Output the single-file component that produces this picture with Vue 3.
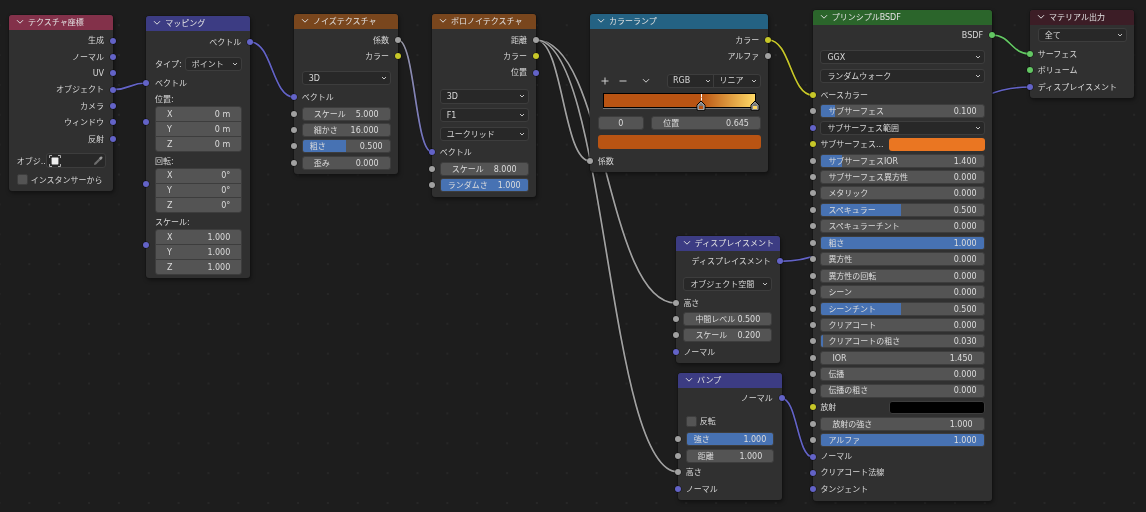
<script setup>
const out = (t, y, s = 'g') => ({ k: 'out', t, y, s, h: 16 })
const inp = (t, y, s = 'p') => ({ k: 'in', t, y, s, h: 16 })
const num = (t, v, y, o = {}) => ({ k: 'num', t, v, y, s: 'g', h: 14, ...o })
const pl = (t, v, y) => num(t, v, y, { plain: true })
const dd = (t, y, o = {}) => ({ k: 'dd', t, y, h: 14.5, ...o })
const lbl = (t, y) => ({ k: 'lbl', t, y, h: 12 })
const grp = (y, h, top, items) => ({ k: 'grp', y, h, top, items, s: 'p' })
const ax = (v) => ['X', 'Y', 'Z'].map((a) => ({ a, v }))

const rawNodes = [
  {
    id: 'tex', title: 'テクスチャ座標', head: 'h-tex', x: 9, y: 15, w: 104, b: 191,
    rows: [
      out('生成', 40.5, 'p'), out('ノーマル', 57, 'p'), out('UV', 73.3, 'p'), out('オブジェクト', 89.7, 'p'),
      out('カメラ', 106, 'p'), out('ウィンドウ', 122.5, 'p'), out('反射', 139, 'p'),
      { k: 'obj', t: 'オブジ...', y: 161, h: 15 },
      { k: 'chk', t: 'インスタンサーから', y: 180, h: 12 },
    ],
  },
  {
    id: 'map', title: 'マッピング', head: 'h-vec', x: 146.3, y: 16, w: 104, b: 278,
    rows: [
      out('ベクトル', 42, 'p'),
      { k: 'type', t: 'タイプ:', v: 'ポイント', y: 64, h: 14.5 },
      inp('ベクトル', 83),
      lbl('位置:', 99.3), grp(129.5, 44, 12, ax('0 m')),
      lbl('回転:', 161.3), grp(190.5, 43, 12, ax('0°')),
      lbl('スケール:', 222.3), grp(252.3, 44, 12, ax('1.000')),
    ],
  },
  {
    id: 'noise', title: 'ノイズテクスチャ', head: 'h-tx', x: 294, y: 14, w: 104, b: 173.5,
    rows: [
      out('係数', 40), out('カラー', 56, 'y'), dd('3D', 78), inp('ベクトル', 97),
      pl('スケール', '5.000', 114), pl('細かさ', '16.000', 130), num('粗さ', '0.500', 146, { f: 0.5 }), pl('歪み', '0.000', 163),
    ],
  },
  {
    id: 'vor', title: 'ボロノイテクスチャ', head: 'h-tx', x: 432, y: 14, w: 104, b: 196.7,
    rows: [
      out('距離', 40), out('カラー', 56, 'y'), out('位置', 72.5, 'p'),
      dd('3D', 96.3), dd('F1', 115.2), dd('ユークリッド', 134.2), inp('ベクトル', 152),
      pl('スケール', '8.000', 169), num('ランダムさ', '1.000', 185, { f: 1 }),
    ],
  },
  {
    id: 'ramp', title: 'カラーランプ', head: 'h-ramp', x: 590, y: 14, w: 178.3, b: 171.7,
    rows: [
      out('カラー', 40, 'y'), out('アルファ', 56),
      { k: 'ramp', y: 112.2, h: 75.5 },
      inp('係数', 161, 'g'),
    ],
  },
  {
    id: 'bsdf', title: 'プリンシプルBSDF', head: 'h-sh', x: 812.7, y: 10, w: 179.3, b: 500.7,
    rows: [
      out('BSDF', 35, 'e'), dd('GGX', 57), dd('ランダムウォーク', 76), inp('ベースカラー', 95, 'y'),
      num('サブサーフェス', '0.100', 111.3, { f: 0.085 }),
      dd('サブサーフェス範囲', 128, { s: 'p' }),
      { k: 'col', t: 'サブサーフェス...', c: 'swatch-orange', y: 144.5, h: 14, s: 'y' },
      num('サブサーフェスIOR', '1.400', 161.2, { f: 0.127 }),
      num('サブサーフェス異方性', '0.000', 177.3), num('メタリック', '0.000', 193.3),
      num('スペキュラー', '0.500', 210.2, { f: 0.49 }), num('スペキュラーチント', '0.000', 226.3),
      num('粗さ', '1.000', 243, { f: 1 }), num('異方性', '0.000', 259.3), num('異方性の回転', '0.000', 276),
      num('シーン', '0.000', 292.2), num('シーンチント', '0.500', 309, { f: 0.49 }), num('クリアコート', '0.000', 325.3),
      num('クリアコートの粗さ', '0.030', 341.3, { f: 0.012 }), pl('IOR', '1.450', 358.3),
      num('伝播', '0.000', 374.3), num('伝播の粗さ', '0.000', 391),
      { k: 'col', t: '放射', c: 'swatch-black', y: 407.5, h: 14, s: 'y' },
      pl('放射の強さ', '1.000', 424.3), num('アルファ', '1.000', 440.2, { f: 1 }),
      inp('ノーマル', 457), inp('クリアコート法線', 473), inp('タンジェント', 489.3),
    ],
  },
  {
    id: 'outn', title: 'マテリアル出力', head: 'h-out', x: 1030, y: 10, w: 104, b: 97.7,
    rows: [dd('全て', 35), inp('サーフェス', 54, 'e'), inp('ボリューム', 70.3, 'e'), inp('ディスプレイスメント', 87)],
  },
  {
    id: 'disp', title: 'ディスプレイスメント', head: 'h-vec', x: 675.7, y: 236, w: 104, b: 363.3,
    rows: [
      out('ディスプレイスメント', 261.3, 'p'), dd('オブジェクト空間', 284), inp('高さ', 303, 'g'),
      pl('中間レベル', '0.500', 319.3), pl('スケール', '0.200', 335.3), inp('ノーマル', 352),
    ],
  },
  {
    id: 'bump', title: 'バンプ', head: 'h-vec', x: 678, y: 373, w: 103.7, b: 500,
    rows: [
      out('ノーマル', 398.3, 'p'),
      { k: 'chk', t: '反転', y: 421.3, h: 12 },
      num('強さ', '1.000', 439.3, { f: 1 }), pl('距離', '1.000', 456.3), inp('高さ', 472, 'g'), inp('ノーマル', 489),
    ],
  },
]

const HEAD = 14.5
const nodes = rawNodes.map((n) => {
  let cursor = n.y + HEAD
  const rows = n.rows.map((r) => {
    const top = r.y - r.h / 2
    const mt = +(top - cursor).toFixed(2)
    cursor = top + r.h
    return { ...r, mt }
  })
  return { ...n, rows, h: n.b - n.y }
})

const curve = (x1, y1, x2, y2) => {
  const d = (x2 - x1) / 2
  return `M${x1} ${y1}C${x1 + d} ${y1} ${x2 - d} ${y2} ${x2} ${y2}`
}
const links = [
  { d: curve(113, 89.7, 146.3, 83), c: '#6363c7' },
  { d: curve(250.3, 42, 294, 97), c: '#6363c7' },
  { d: curve(398, 40, 432, 152), c: 'url(#gp)' },
  { d: curve(536, 40, 590, 161), c: '#a1a1a1' },
  { d: curve(536, 40, 675.7, 303), c: '#a1a1a1' },
  { d: curve(536, 40, 678, 472), c: '#a1a1a1' },
  { d: curve(768.3, 40, 812.7, 95), c: '#c7c729' },
  { d: curve(992, 35, 1030, 54), c: '#63c763' },
  { d: curve(779.7, 261.3, 1030, 87), c: '#6363c7' },
  { d: curve(781.7, 398.3, 812.7, 457), c: '#6363c7' },
]
</script>

<template>
  <main class="canvas">
    <svg class="links" width="1146" height="512" viewBox="0 0 1146 512">
      <defs>
        <linearGradient id="gp" gradientUnits="userSpaceOnUse" x1="398" y1="0" x2="432" y2="0">
          <stop offset="0" stop-color="#a1a1a1" />
          <stop offset="1" stop-color="#6363c7" />
        </linearGradient>
      </defs>
      <g v-for="(l, i) in links" :key="i" fill="none">
        <path :d="l.d" stroke="#111" stroke-opacity=".55" stroke-width="2.8" />
        <path :d="l.d" :stroke="l.c" stroke-width="1.7" />
      </g>
    </svg>

    <section
      v-for="n in nodes"
      :key="n.id"
      class="node"
      :class="'n-' + n.id"
      :style="{ left: n.x + 'px', top: n.y + 'px', width: n.w + 'px', height: n.h + 'px' }"
    >
      <header class="head" :class="n.head">
        <svg class="chev" width="8" height="6" viewBox="0 0 8 6"><path d="M1 1.2 4 4.2 7 1.2" /></svg>
        <span>{{ n.title }}</span>
      </header>

      <div
        v-for="(r, ri) in n.rows"
        :key="ri"
        class="row"
        :class="'row-' + r.k"
        :style="{ marginTop: r.mt + 'px', height: r.h + 'px' }"
      >
        <i v-if="r.s" class="sock" :class="['s-' + r.s, r.k === 'out' ? 'sr' : 'sl', r.k === 'grp' ? 'stop' : '']"></i>

        <span v-if="r.k === 'out' || r.k === 'in' || r.k === 'lbl'">{{ r.t }}</span>

        <div v-else-if="r.k === 'num'" class="field" :class="{ plain: r.plain }">
          <b v-if="r.f" class="fill" :style="{ width: r.f * 100 + '%' }"></b>
          <span class="ft">{{ r.t }}</span>
          <span class="fv">{{ r.v }}</span>
        </div>

        <div v-else-if="r.k === 'dd'" class="drop">
          <span>{{ r.t }}</span>
          <svg class="dchev" width="6" height="4" viewBox="0 0 6 4"><path d="M1 1 3 3 5 1" /></svg>
        </div>

        <template v-else-if="r.k === 'type'">
          <span class="tlabel">{{ r.t }}</span>
          <div class="drop">
            <span>{{ r.v }}</span>
            <svg class="dchev" width="6" height="4" viewBox="0 0 6 4"><path d="M1 1 3 3 5 1" /></svg>
          </div>
        </template>

        <template v-else-if="r.k === 'col'">
          <span class="clabel">{{ r.t }}</span>
          <div class="swatch" :class="r.c"></div>
        </template>

        <template v-else-if="r.k === 'obj'">
          <span class="olabel">{{ r.t }}</span>
          <div class="objfield">
            <svg width="12" height="12" viewBox="0 0 12 12" class="objicon">
              <rect x="2.6" y="2.6" width="6.8" height="6.8" rx=".6" fill="#eee" />
              <path d="M.5 3V.5H3M9 .5h2.500V3M11.500 9v2.500H9M3 11.500H.5V9" fill="none" stroke="#bbb" stroke-width=".9" />
            </svg>
            <svg width="10" height="10" viewBox="0 0 10 10" class="dropper">
              <path d="M1 9 1.400 7 6 2.600 7.400 4 3 8.600Z" fill="#6e6e6e" />
              <path d="M5.800 2.200 7.400 .8a1 1 0 0 1 1.700 1.700L7.800 4.200Z" fill="#9a9a9a" />
            </svg>
          </div>
        </template>

        <template v-else-if="r.k === 'chk'">
          <i class="box"></i>
          <span>{{ r.t }}</span>
        </template>

        <div v-else-if="r.k === 'grp'" class="stack">
          <div v-for="it in r.items" :key="it.a" class="cell">
            <span>{{ it.a }}</span>
            <span>{{ it.v }}</span>
          </div>
        </div>

        <div v-else-if="r.k === 'ramp'" class="rampbox">
          <div class="tools">
            <svg width="8" height="8" viewBox="0 0 8 8" class="tool"><path d="M4 .5v7M.5 4h7" /></svg>
            <svg width="8" height="8" viewBox="0 0 8 8" class="tool minus"><path d="M.5 4h7" /></svg>
            <svg width="8" height="6" viewBox="0 0 8 6" class="tool drop-ico"><path d="M1 1.200 4 4.200 7 1.200" /></svg>
            <div class="seg">
              <span>RGB<svg class="dchev" width="6" height="4" viewBox="0 0 6 4"><path d="M1 1 3 3 5 1" /></svg></span>
              <span>リニア<svg class="dchev" width="6" height="4" viewBox="0 0 6 4"><path d="M1 1 3 3 5 1" /></svg></span>
            </div>
          </div>
          <div class="bar">
            <i class="stopline"></i>
            <svg class="handle h1" width="10" height="11" viewBox="0 0 10 11">
              <path d="M1 10V5L5 1 9 5v5Z" fill="#777" stroke="#000" />
              <path d="M2 9.500V5.300L5 2.300 8 5.300V9.500Z" fill="none" stroke="#e8e8e8" stroke-width=".6" />
              <rect x="3" y="6" width="4" height="3" fill="#b95413" />
            </svg>
            <svg class="handle h2" width="10" height="11" viewBox="0 0 10 11">
              <path d="M1 10V5L5 1 9 5v5Z" fill="#777" stroke="#000" />
              <path d="M2 9.500V5.300L5 2.300 8 5.300V9.500Z" fill="none" stroke="#bbb" stroke-width=".6" />
              <rect x="3" y="6" width="4" height="3" fill="#ffd966" />
            </svg>
          </div>
          <div class="rampfields">
            <div class="field idx"><span>0</span></div>
            <div class="field pos"><span class="ft">位置</span><span class="fv">0.645</span></div>
          </div>
          <div class="rampcolor"></div>
        </div>
      </div>
    </section>
  </main>
</template>

<style>
html, body { margin: 0; background: #1d1d1d; overflow: hidden; }
</style>

<style scoped>
.canvas {
  position: relative;
  width: 1146px;
  height: 512px;
  overflow: hidden;
  background-color: #1d1d1d;
  background-image: radial-gradient(circle at center, #272727 0 1.1px, transparent 1.4px);
  background-size: 29.87px 29.87px;
  background-position: 14.4px 10.3px;
  font-family: "DejaVu Sans", "Noto Sans CJK JP", sans-serif;
  font-size: 8px;
  line-height: 12px;
  color: #d8d8d8;
  filter: blur(.3px);
}
.links { position: absolute; left: 0; top: 0; }
.node {
  position: absolute;
  display: flex;
  flex-direction: column;
  box-sizing: border-box;
  background: #303030;
  border-radius: 3px;
  box-shadow: 0 0 0 .6px #141414, 1px 2px 4px rgba(0, 0, 0, .45);
}
.head {
  display: flex;
  align-items: center;
  flex: none;
  height: 14.5px;
  padding-left: 7px;
  border-radius: 3px 3px 0 0;
  color: #e2e2e2;
  white-space: nowrap;
}
.head span, .row span { position: relative; top: .6px; }
.chev { flex: none; margin-right: 4px; }
.chev path { fill: none; stroke: #dcdcdc; stroke-width: 1; }
.h-tex { background: #83314a; }
.h-vec { background: #3c3c83; }
.h-tx { background: #79461d; }
.h-ramp { background: #246283; }
.h-sh { background: #2b652b; }
.h-out { background: #3c1d26; }

.row {
  position: relative;
  display: flex;
  flex: none;
  align-items: center;
  padding: 0 7.4px 0 7.7px;
  white-space: nowrap;
}
.n-map .row { padding: 0 8px 0 8.7px; }
.row-out, .n-map .row-out { justify-content: flex-end; padding-right: 9px; }
.row-lbl { padding-left: 9px; }
.sock {
  position: absolute;
  top: 50%;
  width: 6px;
  height: 6px;
  margin-top: -3px;
  border-radius: 50%;
  box-shadow: 0 0 0 .5px rgba(0, 0, 0, .55);
  z-index: 2;
}
.sl { left: -3px; }
.sr { right: -3px; }
.stop { top: 15px; }
.s-g { background: #a1a1a1; }
.s-y { background: #c7c729; }
.s-p { background: #6363c7; }
.s-e { background: #63c763; }

.field {
  position: relative;
  display: flex;
  flex: 1;
  justify-content: space-between;
  align-items: center;
  box-sizing: border-box;
  height: 14px;
  padding: 0 7px;
  overflow: hidden;
  background: #545454;
  border: 1px solid #3d3d3d;
  border-radius: 3px;
  color: #dcdcdc;
}
.field.plain, .cell { padding: 0 11px; }
.fill { position: absolute; left: 0; top: 0; bottom: 0; background: #4772b3; }
.ft, .fv { position: relative; }
.drop {
  display: flex;
  flex: 1;
  align-items: center;
  justify-content: space-between;
  box-sizing: border-box;
  height: 14.5px;
  padding: 0 3px 0 6px;
  background: #282828;
  border: 1px solid #3d3d3d;
  border-radius: 3px;
  color: #d8d8d8;
}
.dchev path { fill: none; stroke: #d6d6d6; stroke-width: .9; }
.tlabel { margin-right: 3px; }
.clabel { flex: none; width: 69px; overflow: hidden; }
.swatch { flex: 1; height: 13.5px; border-radius: 3px; }
.swatch-orange { background: #ea7622; }
.swatch-black { background: #000; border: 1px solid #3d3d3d; box-sizing: border-box; }
.olabel { flex: none; width: 29px; }
.objfield {
  position: relative;
  display: flex;
  flex: 1;
  align-items: center;
  justify-content: space-between;
  box-sizing: border-box;
  height: 15px;
  padding: 0 2px;
  background: #282828;
  border: 1px solid #3d3d3d;
  border-radius: 3px;
}
.box {
  flex: none;
  width: 11px;
  height: 11px;
  margin-right: 3px;
  background: #545454;
  border: 1px solid #3d3d3d;
  box-sizing: border-box;
  border-radius: 2px;
}
.stack {
  display: flex;
  flex: 1;
  flex-direction: column;
  height: 100%;
  overflow: hidden;
  gap: 1px;
  background: #3d3d3d;
  border: 1px solid #3d3d3d;
  border-radius: 3px;
}
.cell {
  display: flex;
  flex: 1;
  justify-content: space-between;
  align-items: center;
  background: #545454;
  color: #dcdcdc;
}
.rampbox { display: flex; flex: 1; flex-direction: column; height: 100%; }
.tools { display: flex; align-items: center; height: 14px; flex: none; }
.tool { flex: none; }
.tool path { fill: none; stroke: #cfcfcf; stroke-width: 1; }
.tools > .tool:first-child { margin-left: 3px; }
.minus { margin-left: 10px; }
.drop-ico { margin-left: 15px; }
.seg {
  display: flex;
  margin-left: auto;
  width: 94px;
  height: 14px;
  box-sizing: border-box;
  background: #282828;
  border: 1px solid #3d3d3d;
  border-radius: 3px;
  color: #d8d8d8;
}
.seg span {
  display: flex;
  flex: 1;
  align-items: center;
  justify-content: space-between;
  padding: 0 2.500px 0 5px;
  top: 0;
}
.seg span + span { border-left: 1px solid #3d3d3d; }
.bar {
  position: relative;
  flex: none;
  height: 15.500px;
  margin: 4.500px 5px 0 5px;
  box-sizing: border-box;
  border: 1px solid #000;
  background: linear-gradient(90deg, #b95413 64.500%, #ffd966 100%);
}
.bar::after {
  content: "";
  position: absolute;
  left: -1px;
  right: -1px;
  bottom: -2px;
  height: 1px;
  background: #777;
}
.stopline {
  position: absolute;
  left: 64.500%;
  top: 0;
  height: 10px;
  border-left: 1px dashed #fff;
}
.handle { position: absolute; bottom: -4px; z-index: 1; }
.h1 { left: calc(64.500% - 5px); }
.h2 { right: -5px; }
.rampfields { display: flex; gap: 7.500px; margin-top: 8px; flex: none; }
.idx { flex: none; width: 46px; justify-content: center; }
.pos { padding: 0 11px; }
.rampcolor {
  flex: none;
  height: 14px;
  margin-top: 5px;
  background: #b95413;
  border-radius: 3px;
}
</style>
